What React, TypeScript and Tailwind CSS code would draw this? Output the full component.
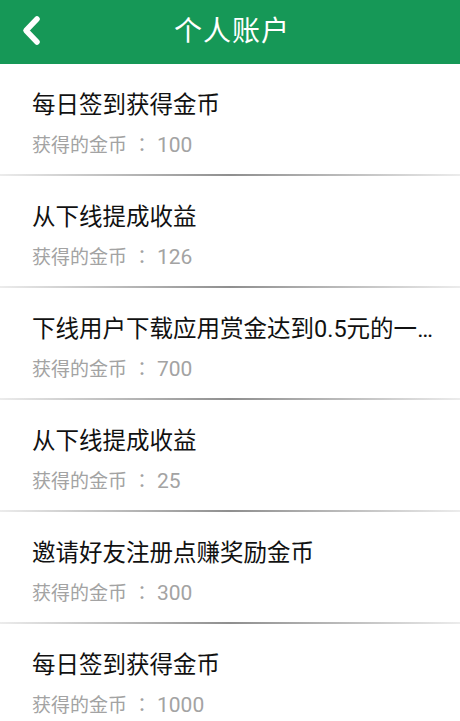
type Item = {
  title: string;
  coins: number;
};

const items: Item[] = [
  { title: "每日签到获得金币", coins: 100 },
  { title: "从下线提成收益", coins: 126 },
  { title: "下线用户下载应用赏金达到0.5元的一次性奖励", coins: 700 },
  { title: "从下线提成收益", coins: 25 },
  { title: "邀请好友注册点赚奖励金币", coins: 300 },
  { title: "每日签到获得金币", coins: 1000 },
];

function Header() {
  return (
    <div className="relative h-[64px] bg-[#169857] flex items-center justify-center">
      <svg
        className="absolute left-[18px] top-[13px]"
        width="28"
        height="36"
        viewBox="0 0 28 36"
      >
        <polyline
          points="19,6 8,17.5 19,29"
          fill="none"
          stroke="#fff"
          strokeWidth="5.5"
          strokeLinecap="round"
          strokeLinejoin="round"
        />
      </svg>
      <h1 className="text-white text-[28px] leading-[34px] tracking-[1px] pl-[4px]">
        个人账户
      </h1>
    </div>
  );
}

function Row({ item }: { item: Item }) {
  return (
    <div>
      <div className="h-[110px] pl-[32px] pr-[18px] pt-[26px]">
        <p className="text-[23.5px] leading-[30px] text-[#111] truncate">
          {item.title}
        </p>
        <p className="mt-[11px] text-[19px] leading-[26px] text-[#a3a3a3]">
          获得的金币
          <span
            className="inline-block w-[30px] text-center"
            style={{ fontFamily: '"Noto Sans CJK TC", sans-serif' }}
          >
            ：
          </span>
          <span className="text-[21px]">{item.coins}</span>
        </p>
      </div>
      <div className="h-[2px] bg-linear-to-r from-[#ececec] via-[#8f8f8f] to-[#ececec]" />
    </div>
  );
}

export default function App() {
  return (
    <div
      className="w-[460px] h-[721px] overflow-hidden bg-white"
      style={{ fontFamily: 'Roboto, "Noto Sans CJK SC", sans-serif' }}
    >
      <Header />
      {items.map((item, i) => (
        <Row key={i} item={item} />
      ))}
    </div>
  );
}
